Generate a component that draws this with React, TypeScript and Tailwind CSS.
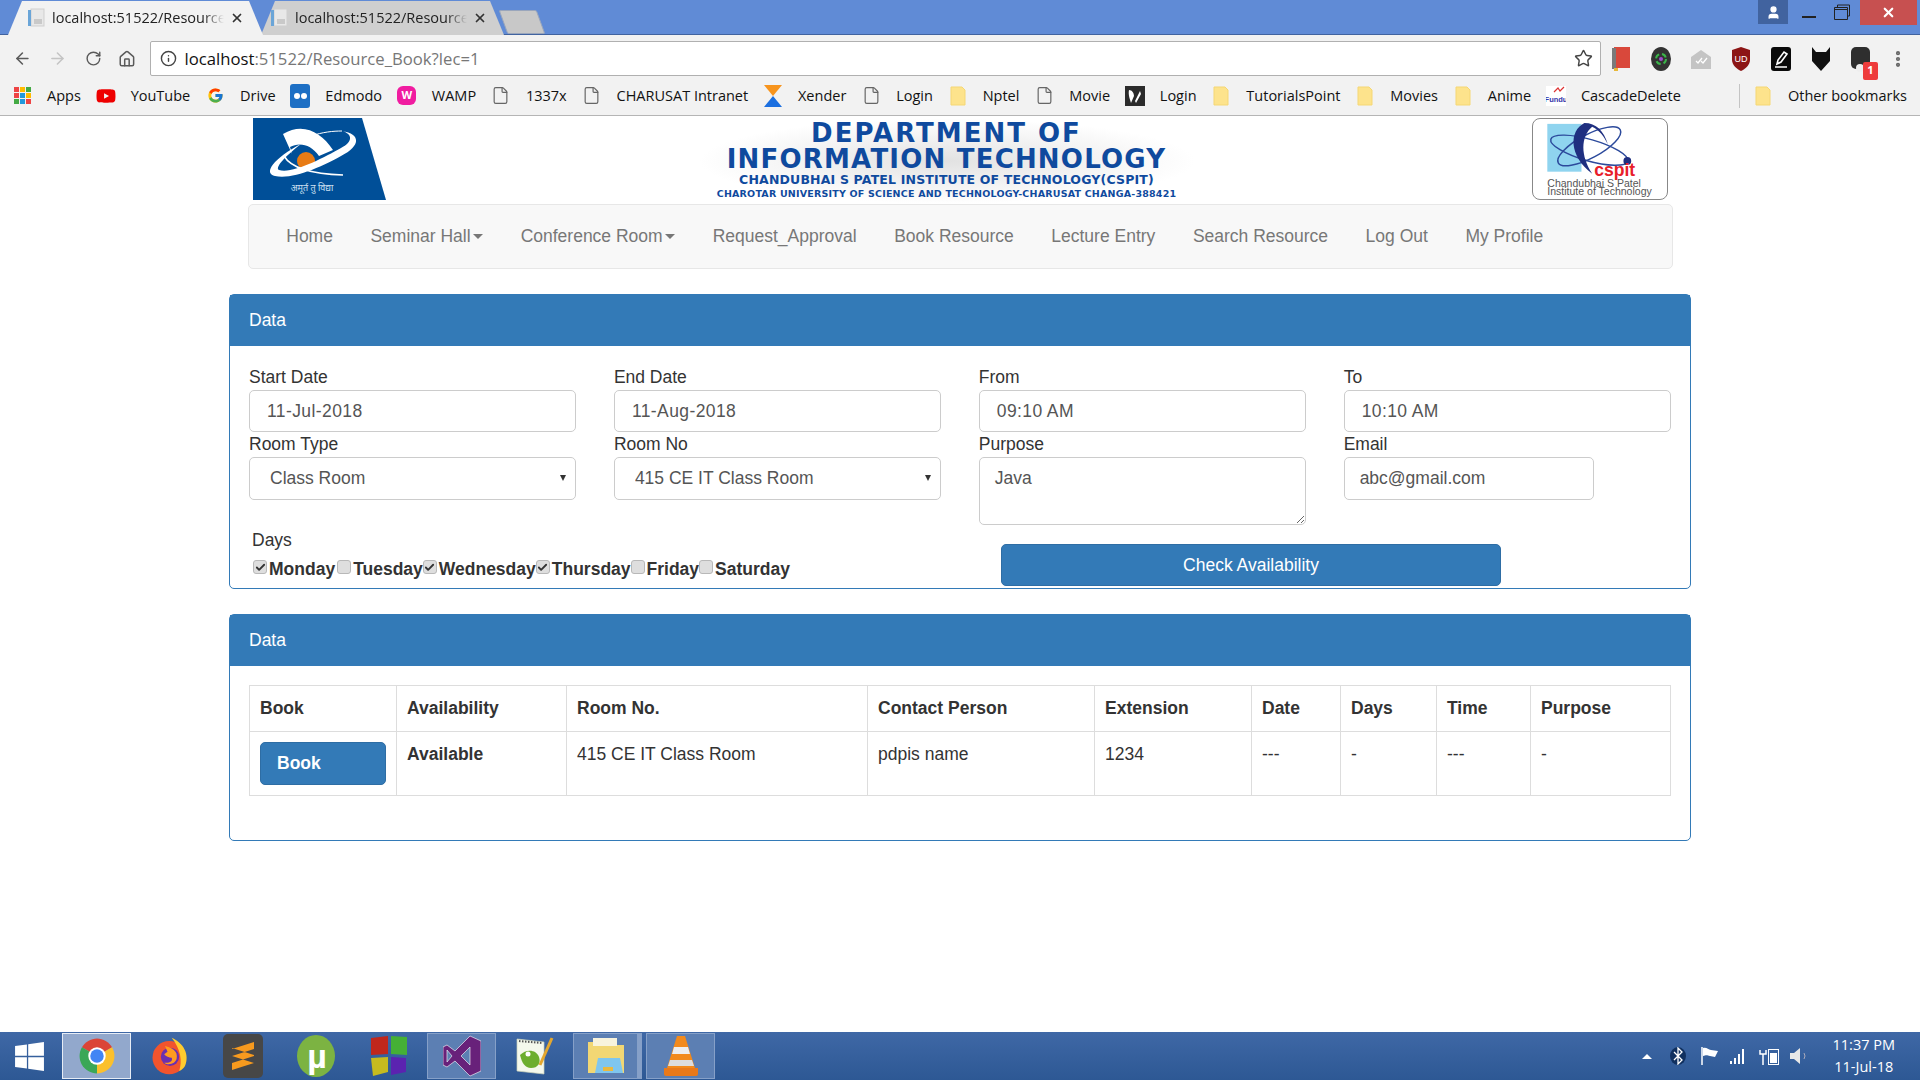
import { ArrowLeft, ArrowRight, RotateCw, House, Info, Star, File, X, Check, EllipsisVertical, User } from "lucide-react"
import { FcGoogle } from "react-icons/fc"
import { FaWindows, FaYoutube } from "react-icons/fa"

const sans = "font-['Liberation_Sans',sans-serif]"
const ui = "font-['Open_Sans',sans-serif]"

function Favicon() {
  return (
    <svg width="20" height="20" viewBox="0 0 20 20" className="shrink-0">
      <rect x="5" y="1" width="13" height="17" fill="#e8e8e8" stroke="#cfcfcf" />
      <rect x="2" y="2" width="3" height="16" fill="#6aa5d8" />
      <rect x="8" y="11" width="8" height="5" fill="#c9c9c9" />
    </svg>
  )
}

function Tab({ active }: { active?: boolean }) {
  return (
    <div className={`${active ? "bg-[#f2f2f2] w-[255px] z-10 pl-[18px]" : "bg-[#cfcfcf] w-[243px] -ml-[2px] pl-[8px]"} h-[34px] mt-[1px] flex items-center pr-[20px] gap-[6px] [clip-path:polygon(0_100%,14px_0,calc(100%-14px)_0,100%_100%)]`}>
      <Favicon />
      <span className={`${ui} text-[14.5px] text-[#222] w-[172px] shrink-0 whitespace-nowrap [mask-image:linear-gradient(to_right,#000_88%,transparent)]`}>localhost:51522/Resource</span>
      <X size={14} strokeWidth={3} className="text-[#333] ml-auto shrink-0" />
    </div>
  )
}

function Folder() {
  return (
    <svg width="16" height="20" viewBox="0 0 16 20">
      <path d="M1 1h11l3 3v15H1z" fill="#fde38c" stroke="#f5d774" />
    </svg>
  )
}

function Page() {
  return <File size={19} strokeWidth={1.5} className="text-[#666]" />
}

function Bookmark({ icon, label }: { icon: React.ReactNode; label: string }) {
  return (
    <div className="flex items-center gap-[15px]">
      <span className="w-5 flex justify-center">{icon}</span>
      <span>{label}</span>
    </div>
  )
}

function Apps() {
  const c = ["#e44", "#fb0", "#4a4", "#e44", "#29d", "#fb0", "#4a4", "#29d", "#e44"]
  return (
    <div className="grid grid-cols-3 gap-[1px] w-[17px]">
      {c.map((x, i) => (
        <span key={i} className="w-[5px] h-[5px]" style={{ background: x }} />
      ))}
    </div>
  )
}

function BrowserChrome() {
  return (
    <div className="shrink-0">
      <div className="h-[35px] bg-[#608bd6] border-b border-[#41639f] flex pl-[8px] relative">
        <Tab active />
        <Tab />
        <div className="w-[38px] h-[24px] mt-[10px] -ml-[1px] bg-[#c8c8c8] border border-[#9aa6bc] rounded-[2px] [transform:skewX(20deg)]" />
        <div className="ml-auto flex items-start">
          <div className="w-[30px] h-[24px] bg-[#41639f] flex items-center justify-center mr-[14px]">
            <User size={15} fill="#fff" className="text-white" />
          </div>
          <div className="w-[14px] h-[2px] bg-[#222] mt-[16px] mr-[18px]" />
          <svg width="16" height="16" viewBox="0 0 16 16" className="mt-[4px] mr-[10px]">
            <path d="M3.5 3V1h12v11h-2M.5 3.5h13v12H.5z M.5 5.5h13" fill="none" stroke="#222" />
          </svg>
          <div className="w-[57px] h-[25px] bg-[#c75050] flex items-center justify-center mr-[3px]">
            <X size={15} strokeWidth={3.5} className="text-white" />
          </div>
        </div>
      </div>
      <div className="h-[41px] bg-[#f2f2f2] flex items-center pt-[6px] pl-[13px] pr-[12px]">
        <ArrowLeft size={19} className="text-[#5a5a5a]" />
        <ArrowRight size={19} className="text-[#c4c4c4] ml-[16px]" />
        <RotateCw size={17} className="text-[#5a5a5a] ml-[18px]" />
        <House size={18} className="text-[#5a5a5a] ml-[16px]" />
        <div className="ml-[15px] w-[1461px] h-[35px] bg-white border border-[#b0b0b0] rounded-[2px] flex items-center pl-[9px] pr-[7px] gap-[5px]">
          <Info size={17} className="text-[#444]" />
          <span className={`${ui} text-[16.7px] text-[#777] ml-[2px]`}>
            <span className="text-[#111]">localhost</span>:51522/Resource_Book?lec=1
          </span>
          <Star size={19} strokeWidth={1.8} className="ml-auto text-[#444]" />
        </div>
        <div className="flex items-center gap-[20px] ml-[10px]">
          <svg width="20" height="24" viewBox="0 0 20 24"><rect x="3" width="16" height="21" fill="#d9483b" /><rect y="1" x="1" width="4" height="21" fill="#7a7a7a" /><rect x="3" y="21" width="4" height="3" fill="#e8b93a" /></svg>
          <svg width="20" height="24" viewBox="0 0 20 24"><ellipse cx="10" cy="12" rx="10" ry="12" fill="#333" /><circle cx="10" cy="12" r="5" fill="none" stroke="#3bb54a" strokeWidth="2" strokeDasharray="5 3" /><circle cx="10" cy="12" r="2" fill="#a04ad0" /></svg>
          <svg width="20" height="20" viewBox="0 0 20 20"><path d="M0 8l10-7 10 7v12H0z" fill="#c4c4c4" /><path d="M5 12l2 2 4-5M10 12l2 2 4-5" fill="none" stroke="#fff" strokeWidth="1.3" /></svg>
          <svg width="20" height="24" viewBox="0 0 20 24"><path d="M10 0l9 3v10c0 5-5 9-9 11-4-2-9-6-9-11V3z" fill="#8c1515" /><text x="10" y="15" textAnchor="middle" fontSize="9" fill="#fff" className={sans}>UD</text></svg>
          <svg width="20" height="24" viewBox="0 0 20 24"><rect width="20" height="24" rx="3" fill="#0a0a0a" /><path d="M6 17l1-4 6-8 3 2-6 8zM4 20h12" fill="none" stroke="#fff" strokeWidth="1.6" /></svg>
          <svg width="20" height="24" viewBox="0 0 20 24"><path d="M1 0l4 5h10l4-5v14l-9 10-9-10z" fill="#111" /></svg>
          <div className="relative w-[20px] h-[24px]">
            <div className="w-[19px] h-[22px] rounded-[5px] bg-[#2e2e2e]" />
            <div className="absolute left-[5px] bottom-[-1px] w-[8px] h-[8px] rounded-full bg-[#eee]" />
            <div className="absolute -right-[7px] top-[15px] w-[15px] h-[18px] rounded-[2px] bg-[#ee3b3b] text-white text-[11px] font-bold flex items-center justify-center">1</div>
          </div>
          <EllipsisVertical size={20} strokeWidth={3} className="text-[#666] -ml-[3px]" />
        </div>
      </div>
      <div className={`${ui} h-[40px] text-[14.5px] text-[#111] bg-[#f2f2f2] border-b border-[#b5b5b5] flex items-center gap-[14.8px] pl-[12px] pr-[13px] whitespace-nowrap`}>
        <Bookmark icon={<Apps />} label="Apps" />
        <Bookmark icon={<FaYoutube size={20} className="text-[#e00]" />} label="YouTube" />
        <Bookmark icon={<FcGoogle size={17} />} label="Drive" />
        <Bookmark icon={<span className="w-[20px] h-[24px] rounded-[3px] bg-[#1d6fc4] flex items-center justify-center gap-[1px]"><span className="w-[6px] h-[6px] rounded-full bg-white" /><span className="w-[6px] h-[6px] rounded-full bg-white" /></span>} label="Edmodo" />
        <Bookmark icon={<span className="w-[19px] h-[19px] rounded-[6px] bg-[#f01ca0] text-white text-[11px] font-bold flex items-center justify-center">W</span>} label="WAMP" />
        <Bookmark icon={<Page />} label="1337x" />
        <Bookmark icon={<Page />} label="CHARUSAT Intranet" />
        <Bookmark icon={<svg width="18" height="22" viewBox="0 0 18 22"><path d="M0 0h18L9 11z" fill="#f7941d" /><path d="M9 11l9 11H0z" fill="#1b6fe0" /></svg>} label="Xender" />
        <Bookmark icon={<Page />} label="Login" />
        <Bookmark icon={<Folder />} label="Nptel" />
        <Bookmark icon={<Page />} label="Movie" />
        <Bookmark icon={<svg width="20" height="20" viewBox="0 0 20 20"><rect width="20" height="20" fill="#2b2b2b" /><path d="M4 4c3 0 5 3 5 6l-3 7c-1-4-3-8-2-13zM15 5l1 3-5 9-1-2z" fill="#fff" /></svg>} label="Login" />
        <Bookmark icon={<Folder />} label="TutorialsPoint" />
        <Bookmark icon={<Folder />} label="Movies" />
        <Bookmark icon={<Folder />} label="Anime" />
        <Bookmark icon={<svg width="20" height="24" viewBox="0 0 20 24"><rect y="2" width="20" height="20" fill="#fff" /><path d="M8 8l4-4 2 3 4-4" fill="none" stroke="#d33" strokeWidth="1.2" /><text x="10" y="18" textAnchor="middle" fontSize="7.5" fontWeight="700" fill="#33a" className={sans}>Fundu</text></svg>} label="CascadeDelete" />
        <div className="ml-auto w-px h-[24px] bg-[#c4c4c4] -mr-[2px]" />
        <Bookmark icon={<Folder />} label="Other bookmarks" />
      </div>
    </div>
  )
}

function LeftLogo() {
  return (
    <svg width="133" height="82" viewBox="0 0 133 82">
      <path d="M0 0h109l24 82H0z" fill="#004f98" />
      <path d="M30 16C50 4 68 14 80 32L66 38C58 26 46 24 37 29L39 36z" fill="#fff" />
      <circle cx="53" cy="43" r="9" fill="#e87b14" />
      <path d="M89 13C108 16 108 28 88 38 70 48 40 62 22 58 12 56 16 44 44 28L48 26C30 40 22 50 26 52 40 56 70 40 88 30 100 24 100 16 89 13z" fill="#fff" />
      <path d="M31 38C38 50 58 56 90 57" fill="none" stroke="#fff" strokeWidth="1.5" />
      <path d="M58 18C70 14 80 13 89 13" fill="none" stroke="#fff" strokeWidth="1" />
      <text x="59" y="73" textAnchor="middle" fontSize="9" fill="#cfe0f2" className="font-['Noto_Sans',sans-serif]">अमूर्त तु विद्या</text>
    </svg>
  )
}

function RightLogo() {
  return (
    <svg width="136" height="82" viewBox="0 0 136 82" className="border border-[#888] rounded-[8px]">
      <rect x="14" y="5" width="35" height="49" fill="#8fd4ef" />
      <ellipse cx="57" cy="32" rx="41" ry="11" transform="rotate(16 57 32)" fill="none" stroke="#2c4a9c" strokeWidth="1.5" />
      <ellipse cx="57" cy="28" rx="36" ry="12" transform="rotate(-28 57 28)" fill="none" stroke="#2c4a9c" strokeWidth="1.5" />
      <path d="M52 4C36 12 36 38 60 56 48 38 48 18 60 8 68 12 72 18 76 26 72 12 64 4 52 4z" fill="#1f2f80" />
      <circle cx="96" cy="43" r="4" fill="#1f2f80" />
      <text x="62" y="58" fontSize="18" fontWeight="700" fill="#e8202a" className={sans}>cspit</text>
      <text x="14" y="70" fontSize="10.8" fill="#555" className={sans}>Chandubhai S Patel</text>
      <text x="14" y="78" fontSize="10.8" fill="#555" className={sans}>Institute of Technology</text>
    </svg>
  )
}

function Title() {
  const f = "font-['DejaVu_Sans',sans-serif] font-bold text-[#0f4a9e] whitespace-nowrap"
  return (
    <div className="h-[86px] w-[500px] mr-[24px] pt-[2px] flex flex-col items-center bg-[radial-gradient(ellipse_at_center,#e2e2e2_0%,#ffffff_70%)]">
      <div className={`${f} text-[26px] leading-[26px] tracking-[2px]`}>DEPARTMENT OF</div>
      <div className={`${f} text-[26px] leading-[26px] tracking-[1.2px]`}>INFORMATION TECHNOLOGY</div>
      <div className={`${f} text-[12.5px] leading-[16px] tracking-[0.17px]`}>CHANDUBHAI S PATEL INSTITUTE OF TECHNOLOGY(CSPIT)</div>
      <div className={`${f} text-[9.5px] leading-[11px] tracking-[0.2px]`}>CHAROTAR UNIVERSITY OF SCIENCE AND TECHNOLOGY-CHARUSAT CHANGA-388421</div>
    </div>
  )
}

function NavItem({ label, caret }: { label: string; caret?: boolean }) {
  return (
    <div className="px-[18.75px] flex items-center text-[#777]">
      {label}
      {caret && <span className="ml-[2.5px] w-0 h-0 border-x-[5px] border-x-transparent border-t-[5px] border-t-[#777]" />}
    </div>
  )
}

function Field({ label, value }: { label: string; value: string }) {
  return (
    <div>
      <label className="block leading-[25px]">{label}</label>
      <input readOnly value={value} className="w-full h-[42px] border border-[#ccc] rounded-[5px] pl-[17px] text-[#555] bg-white tracking-[0.4px]" />
    </div>
  )
}

function SelectBox({ label, value }: { label: string; value: string }) {
  return (
    <div>
      <label className="block leading-[25px]">{label}</label>
      <div className="relative">
        <select defaultValue={value} className="w-full h-[43px] border border-[#ccc] rounded-[5px] pl-[20px] text-[#555] bg-white appearance-none">
          <option>{value}</option>
        </select>
        <span className="absolute right-[10px] top-[18px] w-0 h-0 border-x-[3.5px] border-x-transparent border-t-[6px] border-t-[#333]" />
      </div>
    </div>
  )
}

function Day({ label, on, spaced }: { label: string; on?: boolean; spaced?: boolean }) {
  return (
    <div className={`flex items-center gap-[2px] ${spaced ? "ml-[2px]" : ""}`}>
      <span className="w-[14px] h-[14px] -mt-[5px] rounded-[3px] bg-[#dedede] border border-[#b8b8b8] flex items-center justify-center">
        {on && <Check size={11} strokeWidth={4} className="text-[#333]" />}
      </span>
      <span className="font-bold">{label}</span>
    </div>
  )
}

function Panel({ children }: { children: React.ReactNode }) {
  return (
    <div className="border border-[#337ab7] rounded-[5px]">
      <div className="h-[51px] bg-[#337ab7] text-white flex items-center px-[19px]">Data</div>
      {children}
    </div>
  )
}

function Page_() {
  const th = "border border-[#ddd] px-[10px] h-[46px] text-left font-bold"
  const td = "border border-[#ddd] p-[10px] align-top leading-[25px]"
  return (
    <div className={`${sans} flex-1 bg-white text-[17.5px] text-[#333] flex flex-col items-center`}>
      <div className="w-[1425px] h-[88px] flex items-start justify-between px-[5px] pt-[2px]">
        <LeftLogo />
        <Title />
        <RightLogo />
      </div>
      <div className="w-[1425px] h-[65px] bg-[#f8f8f8] border border-[#e7e7e7] rounded-[5px] flex pl-[19px]">
        <NavItem label="Home" />
        <NavItem label="Seminar Hall" caret />
        <NavItem label="Conference Room" caret />
        <NavItem label="Request_Approval" />
        <NavItem label="Book Resource" />
        <NavItem label="Lecture Entry" />
        <NavItem label="Search Resource" />
        <NavItem label="Log Out" />
        <NavItem label="My Profile" />
      </div>
      <div className="w-[1462px] mt-[25px] flex flex-col gap-[25px]">
        <Panel>
          <div className="px-[19px] pt-[19px] pb-[2px]">
            <div className="grid grid-cols-4 gap-x-[37.5px]">
              <Field label="Start Date" value="11-Jul-2018" />
              <Field label="End Date" value="11-Aug-2018" />
              <Field label="From" value="09:10 AM" />
              <Field label="To" value="10:10 AM" />
              <SelectBox label="Room Type" value="Class Room" />
              <SelectBox label="Room No" value="415 CE IT Class Room" />
              <div>
                <label className="block leading-[25px]">Purpose</label>
                <textarea readOnly value="Java" className="block w-full h-[68px] border border-[#ccc] rounded-[5px] px-[15px] py-[7px] text-[#555]" />
              </div>
              <div>
                <label className="block leading-[25px]">Email</label>
                <input readOnly value="abc@gmail.com" className="w-[250px] h-[43px] border border-[#ccc] rounded-[5px] px-[15px] text-[#555]" />
              </div>
            </div>
            <div className="flex">
              <div className="w-[752px] pl-[3px] pt-[3px]">
                <div className="leading-[25px]">Days</div>
                <div className="flex pl-[1px] mt-[4px] leading-[25px]">
                  <Day label="Monday" on />
                  <Day label="Tuesday" spaced />
                  <Day label="Wednesday" on />
                  <Day label="Thursday" on />
                  <Day label="Friday" />
                  <Day label="Saturday" />
                </div>
              </div>
              <button className="mt-[19px] w-[500px] h-[42px] bg-[#337ab7] border border-[#2e6da4] rounded-[5px] text-white">Check Availability</button>
            </div>
          </div>
        </Panel>
        <Panel>
          <div className="px-[19px] pt-[19px] pb-[44px]">
            <table className="w-full table-fixed border-collapse">
              <thead>
                <tr>
                  <th className={`${th} w-[147px]`}>Book</th>
                  <th className={`${th} w-[170px]`}>Availability</th>
                  <th className={`${th} w-[301px]`}>Room No.</th>
                  <th className={`${th} w-[227px]`}>Contact Person</th>
                  <th className={`${th} w-[157px]`}>Extension</th>
                  <th className={`${th} w-[89px]`}>Date</th>
                  <th className={`${th} w-[96px]`}>Days</th>
                  <th className={`${th} w-[94px]`}>Time</th>
                  <th className={th}>Purpose</th>
                </tr>
              </thead>
              <tbody>
                <tr>
                  <td className={td}>
                    <button className="w-[126px] h-[43px] bg-[#337ab7] border border-[#2e6da4] rounded-[5px] text-white font-bold text-left pl-[16px]">Book</button>
                  </td>
                  <td className={`${td} font-bold`}>Available</td>
                  <td className={td}>415 CE IT Class Room</td>
                  <td className={td}>pdpis name</td>
                  <td className={td}>1234</td>
                  <td className={td}>---</td>
                  <td className={td}>-</td>
                  <td className={td}>---</td>
                  <td className={td}>-</td>
                </tr>
              </tbody>
            </table>
          </div>
        </Panel>
      </div>
    </div>
  )
}

function Cell({ children, boxed, active, stacked }: { children: React.ReactNode; boxed?: boolean; active?: boolean; stacked?: boolean }) {
  const look = active
    ? "bg-[#92a8cc] border-[#e6ecf5]"
    : boxed
      ? "bg-[#5c7fb3] border-[#86a0c8]"
      : "border-transparent"
  return (
    <div className={`w-[69px] h-[46px] mt-[1px] border flex items-center justify-center ${look} ${stacked ? "border-r-[5px]" : ""}`}>
      {children}
    </div>
  )
}

function Taskbar() {
  return (
    <div className={`${ui} h-[48px] shrink-0 flex items-start bg-gradient-to-b from-[#3f68a6] to-[#2d5894] text-white`}>
      <div className="w-[58px] mr-[4px] h-[48px] flex items-center justify-center">
        <FaWindows size={33} className="text-white" />
      </div>
      <div className="flex gap-[4px]">
        <Cell active>
          <svg width="38" height="38" viewBox="0 0 48 48">
            <path d="M24 24L4.95 13A22 22 0 0 1 43.05 13Z" fill="#db4437" />
            <path d="M24 24L43.05 13A22 22 0 0 1 24 46Z" fill="#fbc02d" />
            <path d="M24 24L24 46A22 22 0 0 1 4.95 13Z" fill="#3aa757" />
            <circle cx="24" cy="24" r="11" fill="#fff" />
            <circle cx="24" cy="24" r="8.5" fill="#4285f4" />
          </svg>
        </Cell>
        <Cell>
          <svg width="40" height="40" viewBox="0 0 48 48">
            <circle cx="23" cy="26" r="20" fill="#f2542d" />
            <path d="M26 2c14 6 22 20 16 34-2 3-4 5-7 6 4-12 2-26-9-40z" fill="#ffcb2f" />
            <circle cx="24" cy="25" r="11" fill="#6b2fb0" />
            <path d="M18 12c8 2 16 6 14 15-1 6-10 9-15 5 6 1 11-2 9-6-3 0-7-1-9-4l4-3z" fill="#ff9a1f" />
          </svg>
        </Cell>
        <Cell>
          <svg width="40" height="44" viewBox="0 0 40 44">
            <rect width="40" height="44" rx="5" fill="#474747" />
            <path d="M31 8L9 15v7l22-7zM9 14l22 7v8L9 22zM31 22L9 29v7l22-7z" fill="#f79a1e" />
          </svg>
        </Cell>
        <Cell>
          <svg width="38" height="42" viewBox="0 0 38 42">
            <ellipse cx="19" cy="21" rx="19" ry="21" fill="#7cb342" />
            <text x="20" y="33" textAnchor="middle" fontSize="34" fontWeight="700" fill="#fff" className={sans}>µ</text>
          </svg>
        </Cell>
        <Cell>
          <svg width="38" height="42" viewBox="0 0 38 42">
            <path d="M1 3l17-2v18l-17 1z" fill="#c0271c" />
            <path d="M21 1l16 1v18l-16-1z" fill="#45b035" />
            <path d="M1 23l17-1v15L3 41z" fill="#c6bb1f" />
            <path d="M21 22l15 1v14l-15 3z" fill="#5b23b0" />
          </svg>
        </Cell>
        <Cell boxed>
          <svg width="38" height="42" viewBox="0 0 38 42">
            <path d="M27 1l11 5v30l-11 5-15-15-8 6-4-2V12l4-2 8 6zM27 12l-9 9 9 9zM4 15v12l5-6z" fill="#68217a" stroke="#fff" strokeWidth="0.6" />
          </svg>
        </Cell>
        <Cell>
          <svg width="38" height="42" viewBox="0 0 38 42">
            <path d="M1 4l27 3v32L1 36z" fill="#f4f8ec" stroke="#c8d0b8" strokeWidth="0.7" />
            <path d="M3 6l23 2" stroke="#555" strokeWidth="2" strokeDasharray="1.5 1.5" />
            <path d="M4 20c6-6 16-6 19 2 2 6-1 11-8 11-6 0-9-5-11-13z" fill="#6cae2e" />
            <circle cx="12" cy="19" r="2.5" fill="#fff" />
            <path d="M24 30L36 3" stroke="#e3a72f" strokeWidth="3" />
          </svg>
        </Cell>
        <Cell boxed stacked>
          <svg width="40" height="40" viewBox="0 0 40 40">
            <path d="M2 6h14l3 3h19v28H2z" fill="#f2d774" />
            <rect x="7" y="2" width="24" height="8" fill="#f8f3dc" />
            <path d="M12 22h22l3 15H9z" fill="#7fc6ee" />
            <rect x="17" y="31" width="10" height="4" fill="#e9b941" />
          </svg>
        </Cell>
        <Cell boxed>
          <svg width="36" height="42" viewBox="0 0 36 42">
            <path d="M14 1h8l10 32H4z" fill="#f28a1c" />
            <path d="M11 12h14l2 7H9z" fill="#eee" />
            <path d="M7 25h22l2 6H5z" fill="#ddd" />
            <path d="M1 33h34v6a2 2 0 0 1-2 2H3a2 2 0 0 1-2-2z" fill="#e9791a" />
          </svg>
        </Cell>
      </div>
      <div className="ml-auto h-[48px] flex items-center pr-[25px]">
        <span className="w-0 h-0 border-x-[5px] border-x-transparent border-b-[5px] border-b-white mr-[18px]" />
        <svg width="16" height="18" viewBox="0 0 16 18" className="mr-[14px]">
          <ellipse cx="8" cy="9" rx="8" ry="9" fill="#10305f" />
          <path d="M4 5l8 8-4 4V1l4 4-8 8" fill="none" stroke="#fff" strokeWidth="1.3" />
        </svg>
        <svg width="18" height="18" viewBox="0 0 18 18" className="mr-[11px]">
          <path d="M2 0v18" stroke="#fff" strokeWidth="1.5" />
          <path d="M3 1c4-1 5 2 8 2l7 1-3 6-5-1c-3-1-4-1-7 0z" fill="#fff" />
        </svg>
        <svg width="16" height="16" viewBox="0 0 16 16" className="mr-[14px]">
          <path d="M1 13h2v3H1zM5 10h2v6H5zM9 6h2v10H9zM13 1h2v15h-2z" fill="#fff" />
        </svg>
        <svg width="20" height="18" viewBox="0 0 20 18" className="mr-[11px]">
          <path d="M1 3v4h6V3M4 7v11" fill="none" stroke="#fff" strokeWidth="1.5" />
          <rect x="9.5" y="2.5" width="10" height="15" fill="none" stroke="#fff" />
          <rect x="11" y="6" width="7" height="10" fill="#fff" />
        </svg>
        <svg width="18" height="16" viewBox="0 0 18 16" className="mr-[24px]">
          <path d="M0 5h4l6-5v16l-6-5H0z" fill="#e8e8e8" />
          <path d="M14 5q2 3 0 6" fill="none" stroke="#aab" />
        </svg>
        <div className="text-[14.5px] leading-[22px] text-center">
          <div>11:37 PM</div>
          <div>11-Jul-18</div>
        </div>
      </div>
    </div>
  )
}

export default function App() {
  return (
    <div className="w-[1920px] h-[1080px] flex flex-col overflow-hidden bg-white">
      <BrowserChrome />
      <Page_ />
      <Taskbar />
    </div>
  )
}
